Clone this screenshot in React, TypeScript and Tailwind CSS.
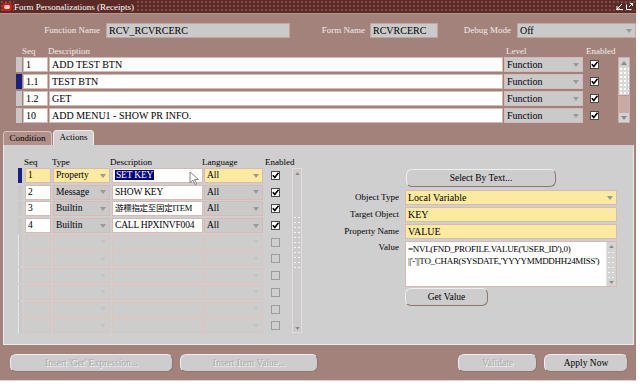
import React from "react"

const serif = "font-['Liberation_Serif','Noto_Sans_CJK_TC',serif]"

function Arrow({ dim }: { dim?: boolean }) {
  return (
    <svg width="6" height="4" viewBox="0 0 6 4" className="shrink-0">
      <path d="M0 0h6L3 4z" fill={dim ? "#c4c4c4" : "#9a9a9a"} />
    </svg>
  )
}

function Check({ on }: { on: boolean }) {
  return (
    <svg width="9" height="9" viewBox="0 0 9 9" className="shrink-0">
      <rect
        x="0.5"
        y="0.5"
        width="8"
        height="8"
        fill={on ? "#ffffff" : "#cfcfcf"}
        stroke={on ? "#4a4a4a" : "#9c9c9c"}
      />
      {on ? <path d="M1.8 4.2l2 2.2L7.5 1.8" stroke="#000" strokeWidth="1.6" fill="none" /> : null}
    </svg>
  )
}

function Field({
  w,
  text,
  bg = "bg-white",
  sel,
  drop,
  dimArrow,
  border = "border-[#d7bab4]",
}: {
  w: string
  text?: React.ReactNode
  bg?: string
  sel?: boolean
  drop?: boolean
  dimArrow?: boolean
  border?: string
}) {
  return (
    <div
      className={`${w} h-[15px] ${bg} border ${border} flex items-center pl-[2px] pr-[3px] overflow-hidden whitespace-nowrap text-black`}
    >
      <span className="flex-1 overflow-hidden leading-[13px]">
        {sel ? <span className="bg-[#00007e] text-white px-[1px]">{text}</span> : text}
      </span>
      {drop ? <Arrow dim={dimArrow} /> : null}
    </div>
  )
}

function Btn({ w, label, off }: { w: string; label: string; off?: boolean }) {
  return (
    <div
      className={`${w} h-[18px] rounded-[6px] bg-[#cdcdcd] border border-t-[#eeeeee] border-l-[#eeeeee] border-b-[#8d7570] border-r-[#8d7570] flex items-center justify-center text-[9.5px] ${
        off ? "text-[#a9a9a9] [text-shadow:1px_1px_0_#f4f4f4]" : "text-black"
      }`}
    >
      {label}
    </div>
  )
}

const topRows = [
  { seq: "1", desc: "ADD TEST BTN" },
  { seq: "1.1", desc: "TEST BTN", cur: true },
  { seq: "1.2", desc: "GET" },
  { seq: "10", desc: "ADD MENU1 - SHOW PR INFO." },
]

const actRows = [
  { seq: "1", type: "Property", desc: "SET KEY", lang: "All", cur: true },
  { seq: "2", type: "Message", desc: "SHOW KEY", lang: "All" },
  { seq: "3", type: "Builtin", desc: "游標指定至固定ITEM", lang: "All", cjk: true },
  { seq: "4", type: "Builtin", desc: "CALL HPXINVF004", lang: "All" },
]

export default function App() {
  const empty = Array.from({ length: 6 })
  return (
    <div className={`w-[640px] h-[386px] bg-white overflow-hidden text-[10px] ${serif}`}>
      <div className="w-[636px] h-[381px] bg-[#a2827b] flex flex-col border-b border-[#d9d3d2]">
        {/* title bar */}
        <div className="h-[14px] flex items-center bg-[#5a2a26] bg-[radial-gradient(circle,#94625b_0.6px,transparent_0.9px)] bg-[length:4px_4px] border-b border-[#b89690]">
          <div className="ml-[2px] w-[10px] h-[8px] rounded-[3px] bg-[#d51d12] flex items-center justify-center">
            <div className="w-[6px] h-[4px] rounded-[2px] bg-[#f4d0cc]" />
          </div>
          <span className="ml-[2px] pr-[2px] bg-[#5a2a26] text-white text-[9px] leading-[12px]">
            Form Personalizations (Receipts)
          </span>
          <div className="flex-1" />
          <div className="flex items-center gap-[3px] pr-[3px] pl-[2px] bg-[#5a2a26]">
            <svg width="7" height="7" viewBox="0 0 7 7">
              <path d="M6 1L1 6M1 3v3h3M0 6.5h7" stroke="#fff" strokeWidth="1" fill="none" />
            </svg>
            <svg width="7" height="7" viewBox="0 0 7 7">
              <path d="M0.5 1.5v5h5M3 4l3.5-3.5M4 0.5h2.5V3" stroke="#fff" strokeWidth="1" fill="none" />
            </svg>
          </div>
        </div>

        {/* function / form / debug */}
        <div className="mt-[9px] flex items-center">
          <div className="w-[100px] text-right text-[9px] text-[#f3ecea]">Function Name</div>
          <Field w="ml-[6px] w-[184px]" text="RCV_RCVRCERC" bg="bg-[#cacaca]" border="border-[#bfa7a2]" />
          <div className="w-[75px] text-right text-[9px] text-[#f3ecea]">Form Name</div>
          <Field w="ml-[5px] w-[68px]" text="RCVRCERC" bg="bg-[#cacaca]" border="border-[#bfa7a2]" />
          <div className="w-[73px] text-right text-[9px] text-[#f3ecea]">Debug Mode</div>
          <Field w="ml-[6px] w-[119px]" text="Off" bg="bg-[#cacaca]" border="border-[#bfa7a2]" drop />
        </div>

        {/* top grid header */}
        <div className="mt-[8px] h-[11px] flex items-end leading-[11px] text-[9px] text-[#f3ecea]">
          <span className="ml-[22px] w-[26px]">Seq</span>
          <span className="w-[458px]">Description</span>
          <span className="w-[80px]">Level</span>
          <span>Enabled</span>
        </div>

        <div className="flex">
          <div className="ml-[16px] flex flex-col gap-[2px]">
            {topRows.map((r) => (
              <div key={r.seq} className="flex items-center">
                <div className={`w-[6px] h-[15px] ${r.cur ? "bg-[#1b1f80]" : "bg-[#c9c6c6]"}`} />
                <Field w="ml-[1px] w-[25px]" text={r.seq} />
                <Field w="ml-[1px] w-[454px]" text={r.desc} />
                <Field w="ml-[1px] w-[79px]" text="Function" bg="bg-[#cacaca]" drop />
                <div className="ml-[7px]">
                  <Check on />
                </div>
              </div>
            ))}
          </div>
          {/* top scrollbar */}
          <div className="ml-[19px] w-[12px] h-[66px] flex flex-col border border-[#c8b0ab] bg-[#caa9a3]">
            <div className="h-[9px] bg-[#d2d2d2] flex items-center justify-center">
              <svg width="6" height="4" viewBox="0 0 6 4"><path d="M0 4h6L3 0z" fill="#8a8a8a" /></svg>
            </div>
            <div className="h-[29px] bg-[#d9d9d9] bg-[radial-gradient(circle,#ffffff_0.7px,transparent_1px)] bg-[length:4px_4px] border-b border-[#b89893]" />
            <div className="flex-1" />
            <div className="h-[9px] bg-[#d2d2d2] flex items-center justify-center">
              <svg width="6" height="4" viewBox="0 0 6 4"><path d="M0 0h6L3 4z" fill="#8a8a8a" /></svg>
            </div>
          </div>
        </div>

        {/* tabs */}
        <div className="mt-[7px] ml-[3px] flex items-end h-[15px] text-[9px]">
          <div className="w-[49px] h-[14px] rounded-t-[4px] border border-b-0 border-[#d7c2be] bg-[#b09089] flex items-center justify-center text-black">
            Condition
          </div>
          <div className="ml-[1px] w-[41px] h-[15px] rounded-t-[4px] border border-b-0 border-[#eeeeee] bg-[#d0cfcf] flex items-center justify-center text-black">
            Actions
          </div>
        </div>

        {/* panel */}
        <div className="ml-[3px] w-[631px] h-[200px] bg-[#d0cfcf] border border-t-0 border-[#ececec] flex">
          {/* actions grid */}
          <div className="flex flex-col text-[9.5px]">
            <div className="mt-[11px] h-[12px] flex items-end leading-[11px] text-[9px] text-black">
              <span className="ml-[20px] w-[28px]">Seq</span>
              <span className="w-[58px]">Type</span>
              <span className="w-[92px]">Description</span>
              <span className="w-[63px]">Language</span>
              <span>Enabled</span>
            </div>
            <div className="flex">
              <div className="ml-[14px] flex flex-col gap-[1.7px]">
                {actRows.map((r) => (
                  <div key={r.seq} className="flex items-center">
                    <div className={`w-[4px] h-[15px] ${r.cur ? "bg-[#1b1f80]" : "bg-[#c9c9c9]"}`} />
                    <Field
                      w="ml-[3px] w-[26px]"
                      text={r.seq}
                      bg={r.cur ? "bg-[#fcea9f]" : "bg-white"}
                    />
                    <Field
                      w="ml-[2px] w-[57px]"
                      text={r.type}
                      bg={r.cur ? "bg-[#fcea9f]" : "bg-[#cacaca]"}
                      drop
                    />
                    <div className="relative">
                      <Field
                        w={`ml-[2px] w-[91px] ${r.cjk ? "text-[8.5px] tracking-[-0.3px]" : "tracking-[-0.2px]"}`}
                        text={r.desc}
                        sel={r.cur}
                      />
                      {r.cur ? (
                        <svg
                          width="10"
                          height="15"
                          viewBox="0 0 10 15"
                          className="absolute left-[79px] top-[3px]"
                        >
                          <path d="M1 1v11l3-3 2 4.5 1.6-.7-2-4.3H9.5z" fill="#fff" stroke="#777" strokeWidth="0.9" />
                        </svg>
                      ) : null}
                    </div>
                    <Field
                      w="ml-[1px] w-[59px]"
                      text={r.lang}
                      bg={r.cur ? "bg-[#fcea9f]" : "bg-[#cacaca]"}
                      drop
                    />
                    <div className="ml-[8px]">
                      <Check on />
                    </div>
                  </div>
                ))}
                {empty.map((_, i) => (
                  <div key={i} className="flex items-center">
                    <div className="w-[4px] h-[15px] bg-[#c9c9c9] border-l border-[#e8e8e8]" />
                    <Field w="ml-[3px] w-[26px]" bg="bg-[#cdcdcd]" border="border-[#dcc3be]" />
                    <Field w="ml-[2px] w-[57px]" bg="bg-[#cdcdcd]" border="border-[#dcc3be]" drop dimArrow />
                    <Field w="ml-[2px] w-[91px]" bg="bg-[#cdcdcd]" border="border-[#dcc3be]" />
                    <Field w="ml-[1px] w-[59px]" bg="bg-[#cdcdcd]" border="border-[#dcc3be]" drop dimArrow />
                    <div className="ml-[8px]">
                      <Check on={false} />
                    </div>
                  </div>
                ))}
              </div>
              {/* grid scrollbar */}
              <div className="ml-[12px] w-[10px] h-[165px] flex flex-col border border-[#e6dcda] bg-[#cbcbcb]">
                <div className="h-[8px] flex items-center justify-center">
                  <svg width="5" height="3" viewBox="0 0 6 4"><path d="M0 4h6L3 0z" fill="#8a8a8a" /></svg>
                </div>
                <div className="mt-[38px] h-[55px] bg-[radial-gradient(circle,#f4f4f4_0.7px,transparent_1px)] bg-[length:4px_5px]" />
                <div className="flex-1" />
                <div className="h-[8px] flex items-center justify-center">
                  <svg width="5" height="3" viewBox="0 0 6 4"><path d="M0 0h6L3 4z" fill="#8a8a8a" /></svg>
                </div>
              </div>
            </div>
          </div>

          {/* property form */}
          <div className="flex flex-col">
            <div className="mt-[24px] ml-[104px]">
              <Btn w="w-[150px]" label="Select By Text..." />
            </div>
            <div className="mt-[3px] flex flex-col gap-[2px]">
              <div className="flex items-center">
                <div className="w-[103px] text-right pr-[6px] text-[9px] text-black">Object Type</div>
                <Field w="w-[212px]" text="Local Variable" bg="bg-[#fcea9f]" drop />
              </div>
              <div className="flex items-center">
                <div className="w-[103px] text-right pr-[6px] text-[9px] text-black">Target Object</div>
                <Field w="w-[212px]" text="KEY" bg="bg-[#fcea9f]" />
              </div>
              <div className="flex items-center">
                <div className="w-[103px] text-right pr-[6px] text-[9px] text-black">Property Name</div>
                <Field w="w-[212px]" text="VALUE" bg="bg-[#fcea9f]" />
              </div>
              <div className="flex items-start">
                <div className="w-[103px] text-right pr-[6px] text-[9px] text-black leading-[13px]">Value</div>
                <div className="w-[212px] h-[46px] bg-white border border-[#d7bab4] flex">
                  <div className="flex-1 pl-[2px] pt-[1px] leading-[12px] text-[9px] tracking-[-0.3px] whitespace-nowrap overflow-hidden">
                    <div>=NVL(FND_PROFILE.VALUE('USER_ID'),0)</div>
                    <div>||'-'||TO_CHAR(SYSDATE,'YYYYMMDDHH24MISS')</div>
                  </div>
                  <div className="w-[10px] flex flex-col bg-[#d3d3d3] border-l border-[#e4e4e4]">
                    <div className="h-[8px] flex items-center justify-center">
                      <svg width="5" height="3" viewBox="0 0 6 4"><path d="M0 4h6L3 0z" fill="#8a8a8a" /></svg>
                    </div>
                    <div className="flex-1 bg-[radial-gradient(circle,#f6f6f6_0.7px,transparent_1px)] bg-[length:4px_5px]" />
                    <div className="h-[8px] flex items-center justify-center">
                      <svg width="5" height="3" viewBox="0 0 6 4"><path d="M0 0h6L3 4z" fill="#8a8a8a" /></svg>
                    </div>
                  </div>
                </div>
              </div>
            </div>
            <div className="mt-[1px] ml-[103px]">
              <Btn w="w-[83px]" label="Get Value" />
            </div>
          </div>
        </div>

        {/* bottom buttons */}
        <div className="mt-[9px] flex">
          <div className="ml-[10px]">
            <Btn w="w-[163px]" label="Insert 'Get' Expression..." off />
          </div>
          <div className="ml-[7px]">
            <Btn w="w-[138px]" label="Insert Item Value..." off />
          </div>
          <div className="ml-[140px]">
            <Btn w="w-[79px]" label="Validate" off />
          </div>
          <div className="ml-[7px]">
            <Btn w="w-[84px]" label="Apply Now" />
          </div>
        </div>
      </div>
    </div>
  )
}
